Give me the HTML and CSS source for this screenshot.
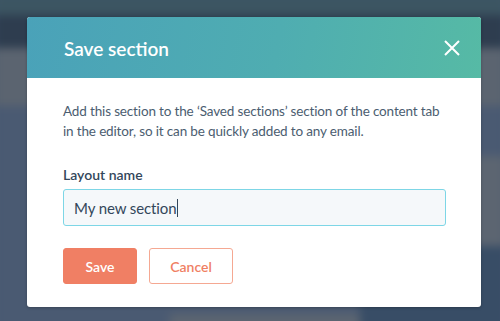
FILE: index.html
```html
<!DOCTYPE html>
<html lang="en">
<head>
  <meta charset="UTF-8">
  <meta name="viewport" content="width=device-width, initial-scale=1.0">
  <title>Save section</title>
  <link rel="stylesheet" href="styles.css">
</head>
<body>

<!-- Blurred page behind the dialog -->
<div class="backdrop">
  <div class="bg-top"></div>
  <div class="bg-nav"></div>
  <div class="bg-hero"></div>
  <div class="bg-main">
    <div class="bg-col bg-left"></div>
    <div class="bg-col bg-mid">
      <div class="bg-slate"></div>
      <div class="bg-grey"></div>
    </div>
    <div class="bg-col bg-right">
      <div class="bg-slate short"></div>
      <div class="bg-grey tall"></div>
      <div class="bg-dark"></div>
    </div>
  </div>
</div>

<!-- Dialog -->
<div class="modal">
  <div class="modal-header">
    <h2>Save section</h2>
    <svg class="close" width="16" height="16" viewBox="0 0 16 16">
      <path d="M1 1 L15 15 M15 1 L1 15" stroke="#fff" stroke-width="2" fill="none"/>
    </svg>
  </div>
  <div class="modal-body">
    <p>Add this section to the ‘Saved sections’ section of the content tab in the editor, so it can be quickly added to any email.</p>
    <label class="field-label">Layout name</label>
    <div class="text-input">My new section<span class="caret"></span></div>
    <div class="actions">
      <button class="btn btn-primary">Save</button>
      <button class="btn btn-secondary">Cancel</button>
    </div>
  </div>
</div>

</body>
</html>
```

FILE: styles.css
```css
body {
  margin: 0;
  width: 500px;
  height: 321px;
  overflow: hidden;
  font-family: Lato, "Open Sans", sans-serif;
  background-color: #4a5a72;
  position: relative;
}

.backdrop {
  height: 340px;
  display: flex;
  flex-direction: column;
  filter: blur(4px);
  margin: -6px;
}

.bg-top {
  height: 21px;
  background-color: #3c5562;
}

.bg-nav {
  height: 33px;
  background-color: #2e3d4f;
}

.bg-hero {
  height: 58px;
  background-color: #5b6470;
}

.bg-main {
  flex: 1;
  display: grid;
  grid-template-columns: 176px 190px 1fr;
}

.bg-col {
  display: flex;
  flex-direction: column;
}

.bg-left {
  background-color: #4a5a72;
}

.bg-slate {
  flex: 1;
  background-color: #4a5a72;
}

.bg-slate.short {
  flex: none;
  height: 50px;
}

.bg-grey {
  height: 20px;
  background-color: #5c6571;
}

.bg-grey.tall {
  height: 90px;
}

.bg-dark {
  flex: 1;
  background-color: #384d66;
}

.modal {
  position: absolute;
  top: 17px;
  left: 27px;
  width: 454px;
  height: 290px;
  background-color: #fff;
  border-radius: 3px;
  overflow: hidden;
  box-shadow: 0 1px 3px rgba(0, 0, 0, 0.25);
}

.modal-header {
  height: 61px;
  display: flex;
  align-items: center;
  justify-content: space-between;
  padding: 0 21px 0 37px;
  background: linear-gradient(100deg, #4aa2b9 0%, #4fadb1 55%, #56baa5 100%);
}

.modal-header h2 {
  margin: 0;
  color: #fff;
  font-size: 19px;
  font-weight: 600;
  padding-top: 1px;
}

.close {
  display: block;
}

.modal-body {
  padding: 23px 35px 0 36px;
  color: #33475b;
}

.modal-body p {
  margin: 0;
  font-size: 13.5px;
  letter-spacing: -0.15px;
  line-height: 20px;
  color: #4b5d70;
}

.field-label {
  display: block;
  margin-top: 24px;
  font-size: 14px;
  line-height: 20px;
  font-weight: 600;
  color: #33475b;
}

.text-input {
  margin-top: 4px;
  box-sizing: border-box;
  height: 37px;
  display: flex;
  align-items: center;
  padding: 0 10px;
  background-color: #f5f8fa;
  border: 1.5px solid #7dd6e6;
  border-radius: 3px;
  font-size: 15px;
  letter-spacing: -0.1px;
  color: #33475b;
}

.caret {
  display: inline-block;
  width: 1px;
  height: 18px;
  background-color: #33475b;
}

.actions {
  display: flex;
  gap: 12px;
  margin-top: 22px;
}

.btn {
  height: 36px;
  box-sizing: border-box;
  border-radius: 3px;
  font-family: inherit;
  font-size: 14px;
  font-weight: 600;
  cursor: pointer;
}

.btn-primary {
  width: 74px;
  background-color: #f07f64;
  border: 1px solid #f07f64;
  color: #fff;
}

.btn-secondary {
  width: 84px;
  background-color: #fff;
  border: 1px solid #f5a892;
  color: #f07f64;
}
```
